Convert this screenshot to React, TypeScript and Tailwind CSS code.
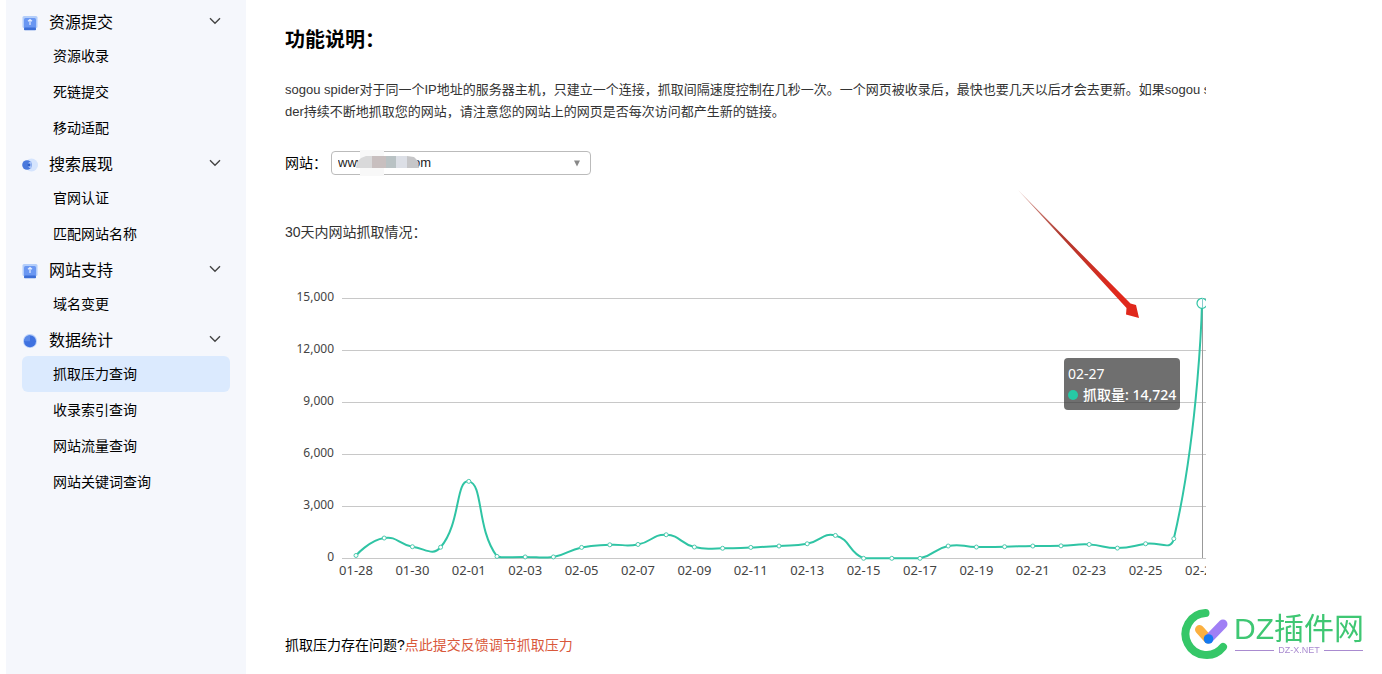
import React from 'react';

const sans = "font-['Liberation_Sans','Noto_Sans_CJK_SC',sans-serif]";

interface Group {
  title: string;
  icon: 'upload' | 'toggle' | 'pie';
  items: string[];
}

const groups: Group[] = [
  { title: '资源提交', icon: 'upload', items: ['资源收录', '死链提交', '移动适配'] },
  { title: '搜索展现', icon: 'toggle', items: ['官网认证', '匹配网站名称'] },
  { title: '网站支持', icon: 'upload', items: ['域名变更'] },
  {
    title: '数据统计',
    icon: 'pie',
    items: ['抓取压力查询', '收录索引查询', '网站流量查询', '网站关键词查询'],
  },
];

const activeItem = '抓取压力查询';

const GroupIcon = ({ name }: { name: Group['icon'] }) => {
  if (name === 'toggle') {
    return (
      <svg width="16" height="16" viewBox="0 0 16 16" aria-hidden="true">
        <circle cx="9.5" cy="8" r="6.5" fill="#d5e4fd" />
        <circle cx="5" cy="8" r="4.8" fill="#4a79dc" />
        <path d="M9.5 4.6a3.4 3.4 0 0 0 0 6.8z" fill="#a9c4f8" />
        <circle cx="7" cy="8" r="1.4" fill="#2f5fc8" />
      </svg>
    );
  }
  if (name === 'pie') {
    return (
      <svg width="16" height="16" viewBox="0 0 16 16" aria-hidden="true">
        <circle cx="8" cy="8" r="7" fill="#b9d0fa" />
        <circle cx="8" cy="8.2" r="6" fill="#3f72e0" />
        <path d="M8 2.2v6H2.2A6 6 0 0 1 8 2.2z" fill="#5a89e8" />
      </svg>
    );
  }
  return (
    <svg width="16" height="16" viewBox="0 0 16 16" aria-hidden="true">
      <rect x="0.5" y="1" width="15" height="12" rx="1.5" fill="#b4cefa" />
      <rect x="2" y="3" width="12" height="10.5" rx="1.5" fill="#6a97f2" />
      <path d="M8 4.5v5.5M6 6.2L8 4.5l2 1.7" stroke="#e4edff" strokeWidth="1.2" fill="none" />
      <rect x="2" y="12.5" width="12" height="2.8" rx="0.8" fill="#3d6fd6" />
    </svg>
  );
};

const Sidebar = () => (
  <nav className="w-60 shrink-0 bg-[#f5f7fc] px-4 pt-1 text-black">
    {groups.map((group) => (
      <section key={group.title}>
        <button type="button" className="flex h-[34px] w-full items-center pr-[9px] text-base">
          <span className="flex flex-1 items-center gap-[11px] pt-1">
            <GroupIcon name={group.icon} />
            {group.title}
          </span>
          <svg width="12" height="8" viewBox="0 0 12 8" fill="none" aria-hidden="true">
            <path d="M1 1.2l5 5 5-5" stroke="#444" strokeWidth="1.4" />
          </svg>
        </button>
        <ul>
          {group.items.map((item) => (
            <li key={item}>
              <a
                href="#"
                className={`flex h-9 items-center rounded-md pl-[31px] text-sm ${
                  item === activeItem ? 'bg-[#dbeafe]' : ''
                }`}
              >
                {item}
              </a>
            </li>
          ))}
        </ul>
      </section>
    ))}
  </nav>
);

const days = [
  '01-28', '01-29', '01-30', '01-31', '02-01', '02-02', '02-03', '02-04', '02-05', '02-06', '02-07',
  '02-08', '02-09', '02-10', '02-11', '02-12', '02-13', '02-14', '02-15', '02-16', '02-17', '02-18',
  '02-19', '02-20', '02-21', '02-22', '02-23', '02-24', '02-25', '02-26', '02-27',
];

const counts = [
  175, 1180, 680, 650, 4450, 120, 90, 90, 640, 790, 810, 1370, 660, 590, 640, 720, 850, 1330, 10, 10,
  10, 720, 660, 680, 720, 730, 810, 600, 850, 1140, 14724,
];

const ticks = [0, 3000, 6000, 9000, 12000, 15000];

const left = 57;
const firstX = 71;
const stepX = 28.2;
const baseY = 278.5;
const plotH = 260;

const yOf = (v: number) => baseY - (v / 15000) * plotH;
const points = counts.map((v, i) => ({ x: firstX + i * stepX, y: yOf(v) }));

// bezier through every point, control points kept inside the data's own range
const smoothPath = (pts: { x: number; y: number }[]) => {
  const minY = Math.min(...pts.map((p) => p.y));
  const maxY = Math.max(...pts.map((p) => p.y));
  const clamp = (y: number) => Math.max(minY, Math.min(maxY, y));
  let d = `M${pts[0].x} ${pts[0].y}`;
  let cp = pts[0];
  for (let i = 1; i < pts.length; i++) {
    const prev = pts[i - 1];
    const p = pts[i];
    const next = pts[i + 1];
    let before = p;
    let after = p;
    if (next) {
      const lenPrev = Math.hypot(p.x - prev.x, p.y - prev.y);
      const lenNext = Math.hypot(next.x - p.x, next.y - p.y);
      const ratio = lenNext / (lenNext + lenPrev);
      const vx = next.x - prev.x;
      const vy = next.y - prev.y;
      before = { x: p.x - vx * 0.5 * (1 - ratio), y: clamp(p.y - vy * 0.5 * (1 - ratio)) };
      after = { x: p.x + vx * 0.5 * ratio, y: clamp(p.y + vy * 0.5 * ratio) };
    }
    d += `C${cp.x} ${cp.y} ${before.x} ${before.y} ${p.x} ${p.y}`;
    cp = after;
  }
  return d;
};

const Chart = () => {
  const last = points[points.length - 1];
  return (
    <svg width="960" height="310" className="block max-w-none font-['Noto_Sans',sans-serif]" role="img">
      {ticks.map((t) => (
        <g key={t}>
          <line x1={left} x2="960" y1={yOf(t)} y2={yOf(t)} stroke="#c8c8c8" />
          <text x="49" y={yOf(t) + 2} textAnchor="end" fontSize="12" fill="#444">
            {t.toLocaleString('en-US')}
          </text>
        </g>
      ))}
      {days.map((day, i) =>
        i % 2 === 0 ? (
          <text key={day} x={points[i].x} y="295" textAnchor="middle" fontSize="13" fill="#444">
            {day}
          </text>
        ) : null
      )}
      <line x1="917.5" x2="917.5" y1="18" y2="278" stroke="#999" />
      <path d={smoothPath(points)} fill="none" stroke="#2fc4a4" strokeWidth="2" />
      {points.slice(0, -1).map((p) => (
        <circle key={p.x} cx={p.x} cy={p.y} r="2" fill="#fff" stroke="#4cc9ae" />
      ))}
      <circle cx={last.x} cy={last.y} r="5" fill="#fff" stroke="#2fc4a4" strokeWidth="1.2" />
      <line x1="917.5" x2="917.5" y1="18" y2="28" stroke="#8cc" />
    </svg>
  );
};

const Tooltip = () => (
  <div className="absolute top-[78px] left-[779px] rounded bg-[#323232]/70 px-1 py-[5px] font-['Noto_Sans','Noto_Sans_CJK_SC',sans-serif] text-sm leading-[21px] whitespace-nowrap text-white">
    <div>02-27</div>
    <div className="flex items-center font-medium">
      <span className="mr-[5px] size-[10px] rounded-full bg-[#26c9a5]" />
      抓取量: 14,724
    </div>
  </div>
);

const Arrow = () => (
  <svg
    width="124"
    height="130"
    viewBox="0 0 124 130"
    className="absolute -top-[91px] left-[732px]"
    aria-hidden="true"
  >
    <defs>
      <linearGradient id="arrow" x1="0" y1="0" x2="1" y2="1">
        <stop offset="0" stopColor="#d8a49c" />
        <stop offset="0.35" stopColor="#b03a30" />
        <stop offset="0.8" stopColor="#e0281c" />
      </linearGradient>
    </defs>
    <path d="M1 1L113.500 114.500L119 116L122 129L109 125.500L109.500 119Z" fill="url(#arrow)" />
  </svg>
);

const SiteSelect = () => (
  <div className="mt-7 flex items-center text-black">
    <label htmlFor="site" className="w-[46px] text-sm">
      网站：
    </label>
    <div className="relative">
      <select
        id="site"
        className="block h-6 w-[260px] appearance-none rounded border border-[#bbb] bg-white pl-[6px] text-[13px] text-[#222]"
      >
        <option>{'www' + '\u00a0'.repeat(13) + 'om'}</option>
      </select>
      <svg
        width="66"
        height="26"
        viewBox="0 0 66 26"
        className="pointer-events-none absolute -top-px left-[25px]"
        aria-hidden="true"
      >
        <rect x="4" y="0" width="24" height="26" fill="#f8f8f8" />
        <path d="M0 18l1-6 4-4 5-2h6v12z" fill="#d9d9da" />
        <rect x="16" y="6" width="14" height="12" fill="#c8bfbf" />
        <rect x="30" y="6" width="10" height="12" fill="#b9c2c4" />
        <rect x="40" y="6" width="11" height="12" fill="#dcdfe6" />
        <path d="M51 6l7 1 4 4 1 7H51z" fill="#c6c6c8" />
      </svg>
      <svg
        width="8"
        height="7"
        viewBox="0 0 8 7"
        className="pointer-events-none absolute top-[9px] right-[10px]"
        aria-hidden="true"
      >
        <path d="M1 0.500h6L4 6.500z" fill="#888" />
      </svg>
    </div>
  </div>
);

const Watermark = () => (
  <div className="fixed right-[18px] bottom-[14px] flex items-center gap-[3px]">
    <svg width="50" height="52" viewBox="0 0 50 52" fill="none" strokeLinecap="round" aria-hidden="true">
      <path d="M24.500 5A21 21 0 1 0 42 39" stroke="#35c768" strokeWidth="8" />
      <path d="M18.500 21.500L27 31" stroke="#fbb040" strokeWidth="9" />
      <path d="M28 30.500L42 16" stroke="#a07ff5" strokeWidth="9" />
      <circle cx="27.500" cy="31" r="4.800" fill="#1479f0" />
    </svg>
    <div className="flex flex-col whitespace-nowrap">
      <span className="text-3xl leading-8 text-[#3fc773]">DZ插件网</span>
      <span className="flex items-center gap-1 px-px text-[9px] leading-[10px] text-[#a98bd0]">
        <span className="h-px flex-1 bg-[#a98bd0]" />
        DZ-X.NET
        <span className="h-px flex-1 bg-[#a98bd0]" />
      </span>
    </div>
  </div>
);

const App = () => (
  <div className={`flex min-h-screen bg-white pl-[6px] ${sans}`}>
    <Sidebar />
    <main className="mr-[176px] ml-[39px] min-w-0 flex-1 overflow-hidden pt-[25px] text-[#333]">
      <h1 className="text-xl leading-[30px] font-bold text-black">功能说明：</h1>
      <p className="mt-6 text-[13px] leading-[22px] whitespace-nowrap">
        sogou spider对于同一个IP地址的服务器主机，只建立一个连接，抓取间隔速度控制在几秒一次。一个网页被收录后，最快也要几天以后才会去更新。如果sogou spi
        <br />
        der持续不断地抓取您的网站，请注意您的网站上的网页是否每次访问都产生新的链接。
      </p>
      <SiteSelect />
      <h2 className="mt-[46px] text-sm leading-[22px]">30天内网站抓取情况：</h2>
      <div className="relative mt-[37px]">
        <Chart />
        <Tooltip />
        <Arrow />
      </div>
      <p className="mt-11 text-sm leading-[22px] text-black">
        抓取压力存在问题?
        <a href="#" className="text-[#d9583b]">
          点此提交反馈调节抓取压力
        </a>
      </p>
    </main>
    <Watermark />
  </div>
);

export default App;
